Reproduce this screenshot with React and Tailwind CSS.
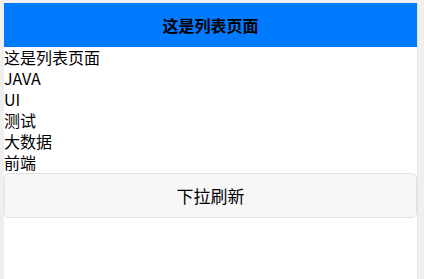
export default function App() {
  const items = ["这是列表页面", "JAVA", "UI", "测试", "大数据", "前端"];
  return (
    <div
      className="w-[424px] h-[279px] bg-[#efefef] pt-[3px] pl-[4px] overflow-hidden"
      style={{ fontFamily: '"Noto Sans CJK SC", "Liberation Sans", sans-serif' }}
    >
      <div className="w-[414px] h-[276px] bg-white border-r border-[#e4e4e4]">
        <div className="h-[44px] bg-[#007aff] flex items-center justify-center">
          <span className="text-[16px] font-bold text-black leading-none">这是列表页面</span>
        </div>
        <div className="flex flex-col">
          {items.map((t) => (
            <div key={t} className="text-[16px] leading-[21px] h-[21px] text-black">
              {t}
            </div>
          ))}
        </div>
        <div className="h-[45px] bg-[#f7f7f7] border border-[#e2e2e2] rounded-[5px] flex items-center justify-center">
          <span className="text-[17px] text-black leading-none">下拉刷新</span>
        </div>
      </div>
    </div>
  );
}
